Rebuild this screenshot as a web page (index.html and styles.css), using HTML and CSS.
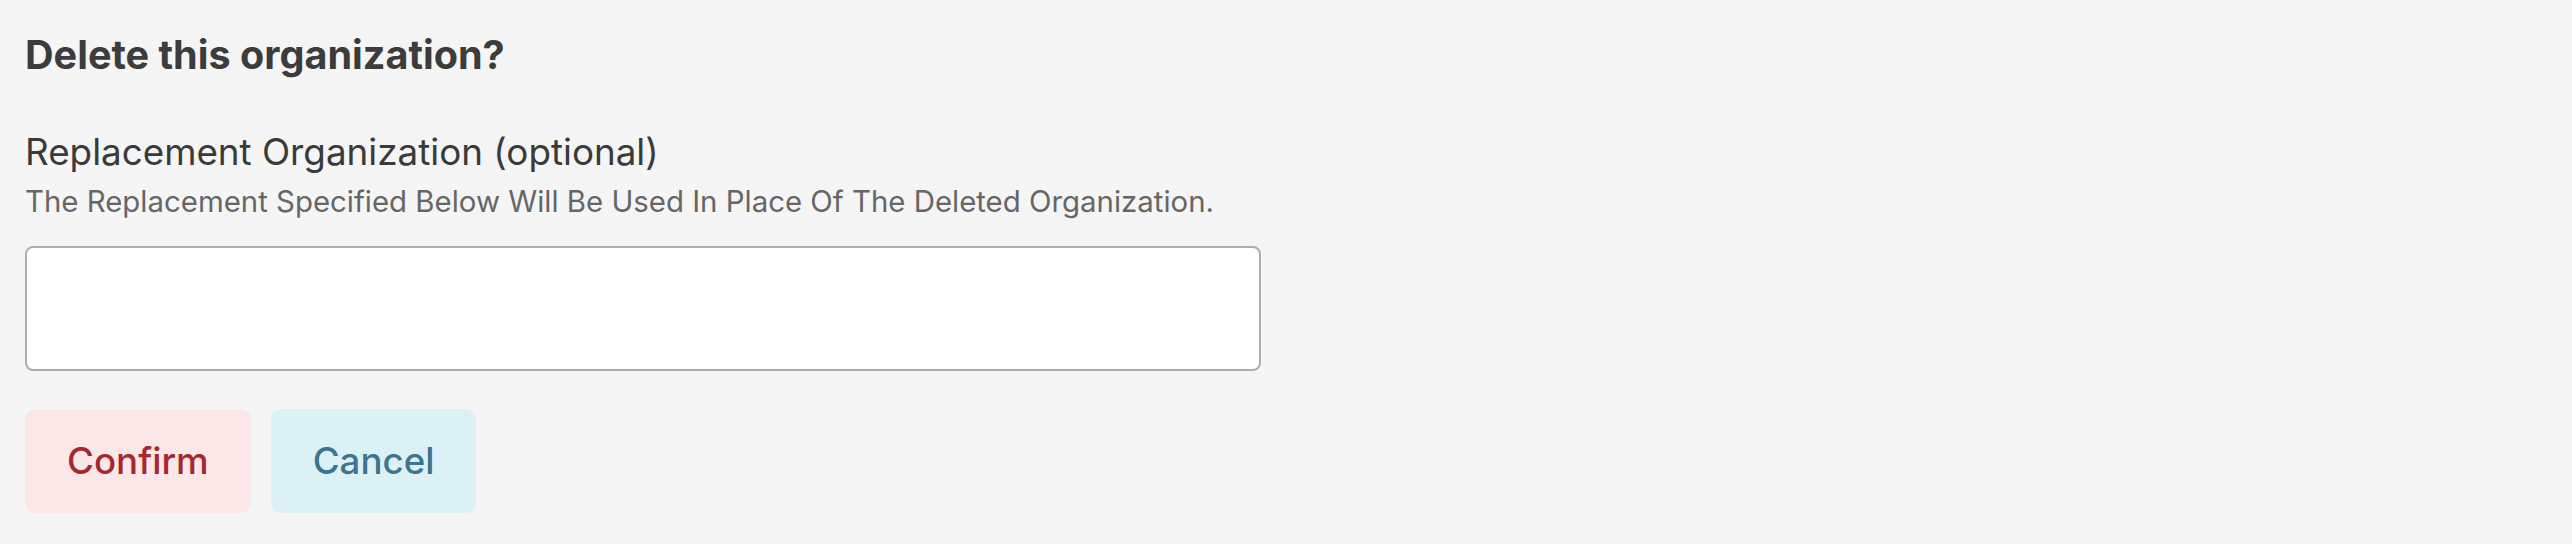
FILE: index.html
```html
<!DOCTYPE html>
<html lang="en">
<head>
<meta charset="utf-8">
<title>Delete this organization?</title>
<link rel="stylesheet" href="styles.css">
</head>
<body>
<div class="page">
  <h1 class="title">Delete this organization?</h1>
  <div class="field">
    <label class="label" for="replacement">Replacement Organization (optional)</label>
    <p class="help">The Replacement Specified Below Will Be Used In Place Of The Deleted Organization.</p>
    <input class="input" id="replacement" type="text">
  </div>
  <div class="actions">
    <button class="btn btn-confirm" type="button">Confirm</button>
    <button class="btn btn-cancel" type="button">Cancel</button>
  </div>
</div>
</body>
</html>
```

FILE: styles.css
```css
html, body {
  margin: 0;
  padding: 0;
  background: #f5f5f5;
}
body {
  font-family: Inter, "Noto Sans", sans-serif;
  width: 2572px;
  height: 544px;
  overflow: hidden;
}
.page {
  padding: 32px 0 0 25px;
  display: flex;
  flex-direction: column;
}
.title {
  margin: 0;
  font-size: 39.6px;
  line-height: 1.2;
  font-weight: 700;
  color: #3c3c3c;
}
.field {
  margin-top: 50px;
  display: flex;
  flex-direction: column;
}
.label {
  font-size: 36.8px;
  line-height: 1.2;
  color: #3a3a3a;
}
.help {
  margin: 10.5px 0 0 0;
  font-size: 29.4px;
  line-height: 1.2;
  color: #666666;
}
.input {
  margin-top: 27px;
  box-sizing: border-box;
  width: 1236px;
  height: 125px;
  border: 2px solid #adadad;
  border-radius: 8px;
  background: #ffffff;
  outline: none;
}
.actions {
  margin-top: 38px;
  display: flex;
  gap: 20px;
}
.btn {
  font-family: Inter, "Noto Sans", sans-serif;
  font-size: 36.7px;
  line-height: 1.2;
  font-weight: 500;
  padding: 30px 42px 0 42px;
  height: 104px;
  box-sizing: border-box;
  border: none;
  border-radius: 10px;
  display: flex;
  align-items: flex-start;
}
.btn-confirm {
  background: #fbe7e7;
  color: #a8272f;
}
.btn-cancel {
  background: #dcf1f5;
  color: #3b7590;
}
```
